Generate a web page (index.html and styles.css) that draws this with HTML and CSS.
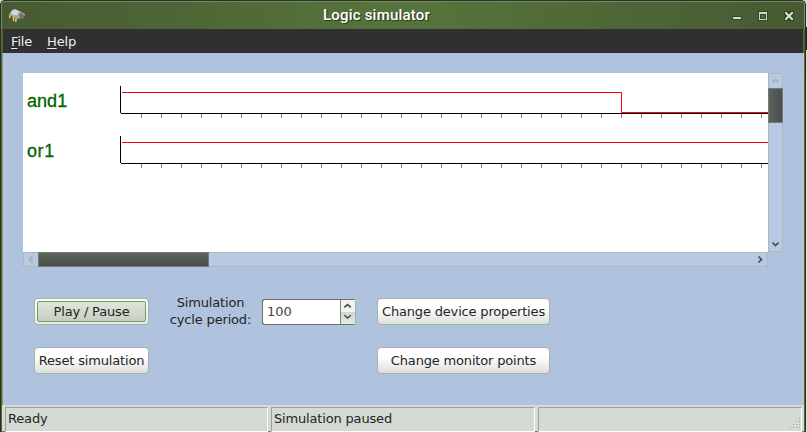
FILE: index.html
```
<!DOCTYPE html>
<html lang="en">
<head>
<meta charset="utf-8">
<title>Logic simulator</title>
<link rel="stylesheet" href="styles.css">
</head>
<body>
<div class="desktop">
<div class="window">
  <header class="titlebar">
    <svg class="app-icon" width="18" height="16" viewBox="0 0 18 16">
      <path d="M2.500 5L1.500 10M5.500 8v5M8.500 9L7.500 14M13 9l1.500 1" stroke="#f0c144" stroke-width="1.600" fill="none"/>
      <path d="M2 5l2-3 3-1 5 2 4 3v3l-3 1-4 1-4-2-3-2z" fill="#a5a5a7"/>
      <path d="M3 4l2-2 2-.5 4 2-2 4-5-1z" fill="#d8d8da"/>
      <path d="M11 6l3-1 3 3-2 2-3 0z" fill="#737373"/>
      <path d="M15 5.500l2 1.500" stroke="#f0c144"/>
    </svg>
    <h1 class="title">Logic simulator</h1>
    <svg class="controls" width="66" height="16" viewBox="0 0 66 16" shape-rendering="crispEdges">
      <path d="M2 9h10v4h-10z" fill="#34452a"/><path d="M3 10h8v2h-8z" fill="#cfdcc8"/>
      <path d="M28 4h10v10h-10z" fill="#34452a"/><path d="M29 5h8v8h-8z" fill="#cfdcc8"/><path d="M30 7h6v5h-6z" fill="#34452a"/><path d="M31 8h4v3h-4z" fill="#526a3a"/>
      <path d="M54 4h4v1h2v-1h4v4h-1v2h1v4h-4v-1h-2v1h-4v-4h1v-2h-1z" fill="#34452a"/>
      <path d="M55 5h2v1h1v1h2v-1h1v-1h2v2h-1v1h-1v2h1v1h1v2h-2v-1h-1v-1h-2v1h-1v1h-2v-2h1v-1h1v-2h-1v-1h-1z" fill="#cfdcc8"/>
    </svg>
  </header>
  <nav class="menubar"><span><u>F</u>ile</span><span><u>H</u>elp</span></nav>
  <main class="content">
    <section class="viewer">
      <svg class="traces" width="745" height="179" viewBox="23 73 745 179">
        <defs>
          <pattern id="ticks" x="141" y="0" width="20" height="500" patternUnits="userSpaceOnUse"><path d="M0 0h1v500h-1z" fill="#808080"/></pattern>
        </defs>
        <g shape-rendering="crispEdges">
          <path d="M120 86h1v27h-1zM121 113h647v1h-647z"/>
          <path d="M141 114h627v4h-627z" fill="url(#ticks)"/>
          <path d="M122 92h500v20h146v1h-147v-20h-499z" fill="#f00"/>
          <path d="M120 136h1v27h-1zM121 163h647v1h-647z"/>
          <path d="M141 164h627v4h-627z" fill="url(#ticks)"/>
          <path d="M122 142h646v1h-646z" fill="#f00"/>
        </g>
        <text class="signal" x="27" y="107" textLength="40">and1</text>
        <text class="signal" x="27" y="157" textLength="27">or1</text>
      </svg>
      <div class="vbar">
        <svg width="13" height="14" viewBox="0 0 13 14"><path class="chev off" d="M3.500 8.500l3-3 3 3"/></svg>
        <div class="vthumb"></div>
        <svg class="end" width="13" height="14" viewBox="0 0 13 14"><path class="chev" d="M3.500 5.500l3 3 3-3"/></svg>
      </div>
      <div class="hbar">
        <svg width="14" height="13" viewBox="0 0 14 13"><path class="chev off" d="M8.500 3.500l-3 3 3 3"/></svg>
        <div class="hthumb"></div>
        <svg class="end" width="14" height="13" viewBox="0 0 14 13"><path class="chev" d="M5.500 3.500l3 3-3 3"/></svg>
      </div>
    </section>
    <section class="panel">
      <button class="btn pressed"><span>Play / Pause</span></button>
      <label class="period">Simulation<br>cycle period:</label>
      <div class="spin">
        <span class="value">100</span>
        <svg class="steps" width="15" height="25" viewBox="0 0 15 25"><path class="chev" d="M3.500 7.500l3.500-3 3.500 3M3.500 16l3.500 3 3.500-3"/></svg>
      </div>
      <button class="btn wide">Change device properties</button>
      <button class="btn">Reset simulation</button>
      <button class="btn wide">Change monitor points</button>
    </section>
  </main>
  <footer class="statusbar">
    <div class="cell">Ready</div>
    <div class="cell">Simulation paused</div>
    <div class="cell"><svg class="grip" width="12" height="12" viewBox="0 0 12 12" shape-rendering="crispEdges"><path d="M10 1h1v1h-1zM7 4h1v1h-1zM10 4h1v1h-1zM4 7h1v1h-1zM7 7h1v1h-1zM10 7h1v1h-1zM1 10h1v1h-1zM4 10h1v1h-1zM7 10h1v1h-1zM10 10h1v1h-1z" fill="#a0a49e"/></svg></div>
  </footer>
</div>
<div class="behind"></div>
</div>
</body>
</html>
```
FILE: styles.css
```
* { box-sizing: border-box; }
body {
  margin: 0;
  overflow: hidden;
  font: 13px/17px "DejaVu Sans", sans-serif;
  letter-spacing: -.17px;
  color: #1f2523;
}
.desktop { display: flex; width: 807px; height: 432px; background: #d8dad6; }
.behind { width: 1px; background: linear-gradient(#ddd 27px, #222 27px, #222 50px, #d5dad4 50px, #d5dad4 78px, #d8e0d8 78px); }
.window {
  width: 806px;
  height: 432px;
  display: flex;
  flex-direction: column;
  border: 1px solid #26331d;
  border-bottom: 0;
  border-radius: 5px 5px 0 0;
  background: #506638;
  overflow: hidden;
}
.titlebar {
  height: 28px;
  display: grid;
  grid-template-columns: 80px 1fr 80px;
  align-items: center;
  border: 1px solid #78896a;
  border-bottom: 0;
  border-radius: 4px 4px 0 0;
  background: linear-gradient(90deg, #475a33, #55733b 46%, #55733b 54%, #475a33);
}
.app-icon { margin: 1px 0 0 6px; }
.title {
  margin: 0 53px 2px 0;
  text-align: center;
  color: #fff;
  font: 500 15px/20px Roboto, sans-serif;
  letter-spacing: .2px;
  text-shadow: 1px 1px 1px #26341b;
}
.controls { margin: -2px 0 0 6px; }
.menubar {
  height: 24px;
  display: flex;
  gap: 15px;
  margin: 0 2px;
  padding: 4px 8px;
  background: #303030;
  color: #eee;
}
.menubar u { text-underline-offset: 2px; }
.content {
  flex: 1;
  padding: 20px 20px 0;
  border: solid #c3c9b5;
  border-width: 0 1px;
  margin: 0 1px;
  background: #b0c3de;
  border-left-color: #8e9e7a;
}
.viewer { display: grid; grid-template: 179px 15px / 745px 15px; }
.traces { display: block; background: #fff; }
.signal { font: 18px "Liberation Sans", sans-serif; fill: #006400; stroke: #006400; stroke-width: .3px; }
.vbar, .hbar { display: flex; border: 1px solid #acb8b8; background: #b8cae3; }
.vbar { flex-direction: column; }
.vbar svg, .hbar svg { flex: none; }
.vthumb { flex: none; height: 35px; margin: 0 -1px; border: 1px solid #737c75; background: linear-gradient(90deg, #5d635f, #4b4d4b); }
.hthumb { flex: none; width: 171px; margin: -1px 0; border: 1px solid #737c75; background: linear-gradient(#5d635f, #4b4d4b); }
.vbar .end { margin-top: auto; }
.hbar .end { margin-left: auto; }
.chev { fill: none; stroke: #444b48; stroke-width: 1.7; }
.chev.off { stroke: #a4aeae; }
.panel {
  display: grid;
  grid-template-columns: 115px 113px 115px 173px;
  grid-template-rows: 27px 27px;
  row-gap: 22px;
  margin: 31px 0 0 11px;
}
.btn {
  font: inherit;
  letter-spacing: inherit;
  color: inherit;
  padding: 0 0 1px;
  white-space: nowrap;
  border: 1px solid #a9b1a9;
  border-radius: 4px;
  background: linear-gradient(#fff 35%, #dce0db);
}
.btn.pressed { padding: 2px; background: linear-gradient(#fff, #e8ebe7); }
.pressed span {
  display: block;
  height: 21px;
  line-height: 19px;
  border: 1px solid #759960;
  border-radius: 2px;
  background: linear-gradient(#dfe7dc, #c6cec2);
}
.btn.wide { grid-column: 4; }
.period { text-align: center; margin: -4px 0 0 10px; }
.spin {
  display: flex;
  width: 94px;
  height: 26px;
  margin-top: 1px;
  border: 1px solid #6c736b;
  border-right-color: #aab0a8;
  border-radius: 3px;
  background: #fff;
}
.value { flex: 1; padding: 3px 4px; letter-spacing: 0; color: #444; }
.steps { height: 24px; border-left: 1px solid #7d857b; background: linear-gradient(#f0f3ef 50%, #d0d7cf 50%, #e6eae4); }
.statusbar {
  height: 27px;
  display: grid;
  grid-template-columns: 264px 264px 1fr;
  gap: 3px;
  padding: 2px;
  margin: 0 1px;
  border-bottom: 1px solid #74835f;
  background: #d5dad4;
}
.cell {
  display: flex;
  padding: 2px;
  border: 1px solid;
  border-color: #9ea29c #fff #fff #9ea29c;
}
.cell:first-child { margin-left: 1px; }
.grip { margin: 7px -2px 0 auto; }
```
